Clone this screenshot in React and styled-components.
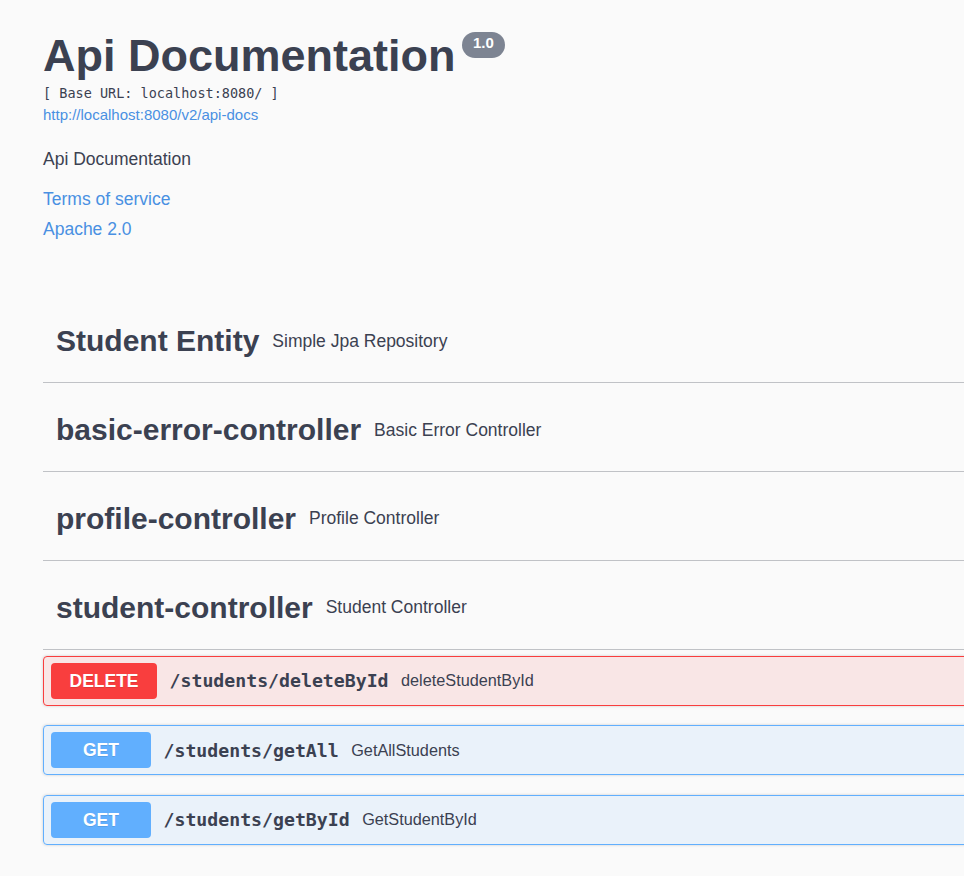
import React from "react";
import styled, { createGlobalStyle } from "styled-components";

const GlobalStyle = createGlobalStyle`
	html, body {
		margin: 0;
		padding: 0;
		overflow: hidden;
		background: #fafafa;
	}

	body {
		font-family: "Liberation Sans", Arial, sans-serif;
		color: #3b4151;
	}
`;

const methodColors = {
	delete: { main: "#f93e3e", bg: "rgba(249, 62, 62, 0.1)" },
	get: { main: "#61affe", bg: "rgba(97, 175, 254, 0.1)" }
};

const Wrapper = styled.div`
	width: 1200px;
	padding: 31px 0 0 43px;
`;

const Info = styled.section`
	display: flex;
	flex-direction: column;
`;

const TitleRow = styled.div`
	display: flex;
	align-items: flex-start;
`;

const Title = styled.h2`
	margin: 0;
	font-size: 45px;
	line-height: 50px;
	font-weight: 700;
	color: #3b4151;
`;

const Version = styled.small`
	margin-left: 6px;
	margin-top: 1px;
	height: 26px;
	box-sizing: border-box;
	padding: 0 11.5px 4px;
	border-radius: 13px;
	background: #7d8492;
	color: #fff;
	font-size: 15px;
	line-height: 22px;
	font-weight: 700;
`;

const BaseUrl = styled.pre`
	margin: 4px 0 0;
	font-family: "DejaVu Sans Mono", "Liberation Mono", monospace;
	font-size: 13.5px;
	line-height: 16px;
	color: #3b4151;
`;

const Link = styled.a`
	display: block;
	color: #4990e2;
	text-decoration: none;
	font-size: ${props => (props.small ? "15px" : "17.5px")};
	line-height: ${props => (props.small ? "18px" : "21px")};
	margin-top: ${props => props.gap}px;
`;

const Description = styled.p`
	margin: 24.5px 0 0;
	font-size: 17.5px;
	line-height: 21px;
`;

const Tags = styled.div`
	margin-top: 61px;
`;

const TagRow = styled.div`
	display: flex;
	align-items: center;
	box-sizing: border-box;
	height: 82.75px;
	padding: 0 13px;
	margin-bottom: 6px;
	border-bottom: 1px solid rgba(59, 65, 81, 0.3);
`;

const TagName = styled.h4`
	margin: 0;
	font-size: 30px;
	line-height: 30px;
	font-weight: 700;
	color: #3b4151;
`;

const TagNote = styled.small`
	margin-left: 13px;
	font-size: 17.5px;
	color: #3b4151;
`;

const Opblock = styled.div`
	margin-bottom: 19.5px;
	border: 1px solid ${props => methodColors[props.method].main};
	border-radius: 4px;
	background: ${props => methodColors[props.method].bg};
	box-shadow: 0 0 3px rgba(0, 0, 0, 0.19);
`;

const Summary = styled.div`
	display: flex;
	align-items: center;
	padding: 6px 7px;
`;

const Method = styled.span`
	min-width: 100px;
	height: 36px;
	box-sizing: border-box;
	padding: 0 18.5px;
	border-radius: 4px;
	background: ${props => methodColors[props.method].main};
	color: #fff;
	font-size: 17.5px;
	line-height: 36px;
	font-weight: 700;
	text-align: center;
	text-shadow: 0 1px 0 rgba(0, 0, 0, 0.1);
`;

const Path = styled.span`
	padding: 0 12.5px;
	font-family: "DejaVu Sans Mono", "Liberation Mono", monospace;
	font-size: 18.2px;
	font-weight: 700;
	color: #3b4151;
`;

const OpDesc = styled.span`
	font-size: 16.25px;
	color: #3b4151;
`;

const tags = [
	{ name: "Student Entity", note: "Simple Jpa Repository" },
	{ name: "basic-error-controller", note: "Basic Error Controller" },
	{ name: "profile-controller", note: "Profile Controller" },
	{ name: "student-controller", note: "Student Controller" }
];

const operations = [
	{ method: "delete", path: "/students/deleteById", desc: "deleteStudentById" },
	{ method: "get", path: "/students/getAll", desc: "GetAllStudents" },
	{ method: "get", path: "/students/getById", desc: "GetStudentById" }
];

export default function App() {
	return (
		<>
			<GlobalStyle />
			<Wrapper>
				<Info>
					<TitleRow>
						<Title>Api Documentation</Title>
						<Version>1.0</Version>
					</TitleRow>
					<BaseUrl>[ Base URL: localhost:8080/ ]</BaseUrl>
					<Link small gap={5} href="#">
						http://localhost:8080/v2/api-docs
					</Link>
					<Description>Api Documentation</Description>
					<Link gap={19.5} href="#">
						Terms of service
					</Link>
					<Link gap={8.5} href="#">
						Apache 2.0
					</Link>
				</Info>
				<Tags>
					{tags.map(tag => (
						<TagRow key={tag.name}>
							<TagName>{tag.name}</TagName>
							<TagNote>{tag.note}</TagNote>
						</TagRow>
					))}
					{operations.map(op => (
						<Opblock key={op.path} method={op.method}>
							<Summary>
								<Method method={op.method}>{op.method.toUpperCase()}</Method>
								<Path>{op.path}</Path>
								<OpDesc>{op.desc}</OpDesc>
							</Summary>
						</Opblock>
					))}
				</Tags>
			</Wrapper>
		</>
	);
}
